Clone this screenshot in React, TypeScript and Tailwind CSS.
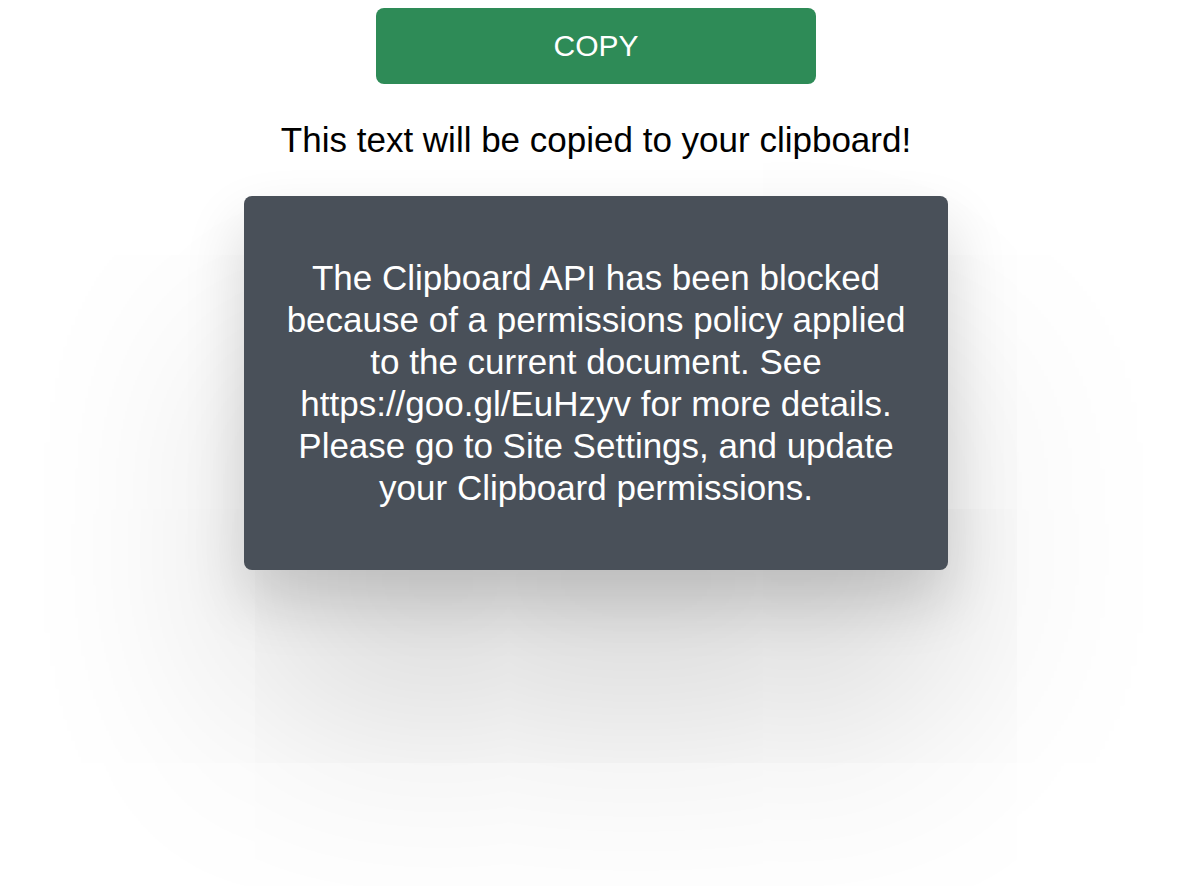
import React from "react";

export default function App() {
  return (
    <div className="min-h-[886px] w-full bg-white flex flex-col items-center pr-[10px] font-['Liberation_Sans',Arial,sans-serif] overflow-hidden">
      <button className="mt-2 w-[440px] h-[76px] rounded-lg bg-[#2e8b57] text-white text-[30px] leading-none">
        COPY
      </button>
      <p className="mt-[36px] text-[35px] leading-[40px] text-black">
        This text will be copied to your clipboard!
      </p>
      <div className="mt-[36px] w-[704px] rounded-lg bg-[#495059] px-[38px] py-[61px] text-center text-white text-[35px] leading-[42px] shadow-[0_30px_60px_rgba(0,0,0,0.16),0_150px_220px_rgba(0,0,0,0.16)]">
        The Clipboard API has been blocked because of a permissions policy applied to the current document. See https://goo.gl/EuHzyv for more details. Please go to Site Settings, and update your Clipboard permissions.
      </div>
    </div>
  );
}
